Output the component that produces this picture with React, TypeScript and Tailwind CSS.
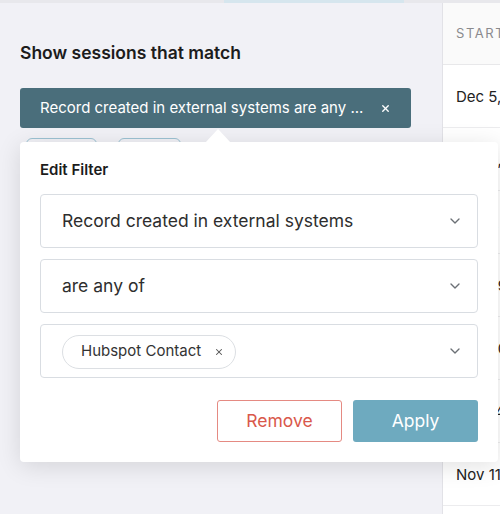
import { ChevronDown, X } from 'lucide-react';

const rows = ['Dec 5, 2023', 'Dec 4, 2023', 'Dec 1, 2023', 'Nov 29, 2023', 'Nov 20, 2023', 'Nov 14, 2023', 'Nov 11, 2023'];

function SelectBox({ children }: { children: React.ReactNode }) {
  return (
    <div className="flex h-[54px] items-center justify-between rounded-[4px] border border-[#d9dde2] bg-white pl-[21px] pr-[14px]">
      <div className="flex items-center pt-[1px] text-[17.5px] text-[#2e2e2e]">{children}</div>
      <ChevronDown size={16} strokeWidth={2} className="text-[#6b7075]" />
    </div>
  );
}

export default function App() {
  return (
    <div className="relative flex h-[514px] w-[500px] flex-col overflow-hidden bg-[#f1f1f6] font-['Inter',sans-serif]">
      <div className="h-[3px] bg-[#e8e8ec]">
        <div className="ml-[224px] h-[3px] w-[180px] bg-[#d6e6ee]" />
      </div>
      <div className="flex flex-1">
        <div className="w-[443px] shrink-0 border-r border-[#e2e2e7] px-5 pt-[38px]">
          <h2 className="text-[17.5px] font-semibold leading-[24px] text-[#1c1c1c]">Show sessions that match</h2>
          <div className="mt-[23px] flex h-[40px] w-[391px] items-center justify-between rounded-[3px] bg-[#4a6e7b] pl-5 pr-5 text-[15px] text-white">
            <span>Record created in external systems are any ...</span>
            <X size={11} strokeWidth={3} />
          </div>
          <div className="mt-[10px] flex gap-[21px] pl-[6px]">
            <div className="h-[28px] w-[71px] rounded-[6px] border border-[#9cc3d3]" />
            <div className="h-[28px] w-[63px] rounded-[6px] border border-[#9cc3d3]" />
          </div>
        </div>
        <div className="min-w-0 flex-1 overflow-hidden bg-white">
          <div className="flex h-[62px] items-center whitespace-nowrap border-b border-[#e8e8ea] bg-[#fafafa] pl-[13px] text-[13px] tracking-[0.12em] text-[#8a8a8e]">
            STARTED
          </div>
          {rows.map((r) => (
            <div key={r} className="flex h-[63px] items-center whitespace-nowrap border-b border-[#ececee] pl-[13px] pt-[2px] text-[15px] text-[#222]">
              {r}
            </div>
          ))}
        </div>
      </div>

      <svg className="absolute left-[205px] top-[127px] z-20" width="26" height="16" viewBox="0 0 26 16">
        <path d="M0 16 L13 2 L26 16 Z" fill="#ffffff" />
      </svg>
      <div className="absolute left-5 top-[142px] z-10 w-[478px] rounded-[4px] bg-white px-5 pb-5 pt-[18px] shadow-[0_4px_24px_rgba(0,0,0,0.12)]">
        <div className="text-[15px] font-semibold leading-[20px] text-[#1c1c1c]">Edit Filter</div>
        <div className="mt-[14px] flex flex-col gap-[11px]">
          <SelectBox>Record created in external systems</SelectBox>
          <SelectBox>are any of</SelectBox>
          <SelectBox>
            <div className="flex h-[34px] items-center gap-[13px] rounded-full border border-[#dcdfe3] pl-[18px] pr-[11px] text-[15px] text-[#333]">
              Hubspot Contact
              <X size={10} strokeWidth={2.5} className="text-[#555]" />
            </div>
          </SelectBox>
        </div>
        <div className="mt-[22px] flex justify-end gap-[11px]">
          <button className="h-[42px] w-[125px] rounded-[3px] border border-[#e58a82] bg-white text-[17.5px] text-[#d9584b]">Remove</button>
          <button className="h-[42px] w-[125px] rounded-[3px] bg-[#6eaabf] text-[17.5px] text-white">Apply</button>
        </div>
      </div>
    </div>
  );
}
